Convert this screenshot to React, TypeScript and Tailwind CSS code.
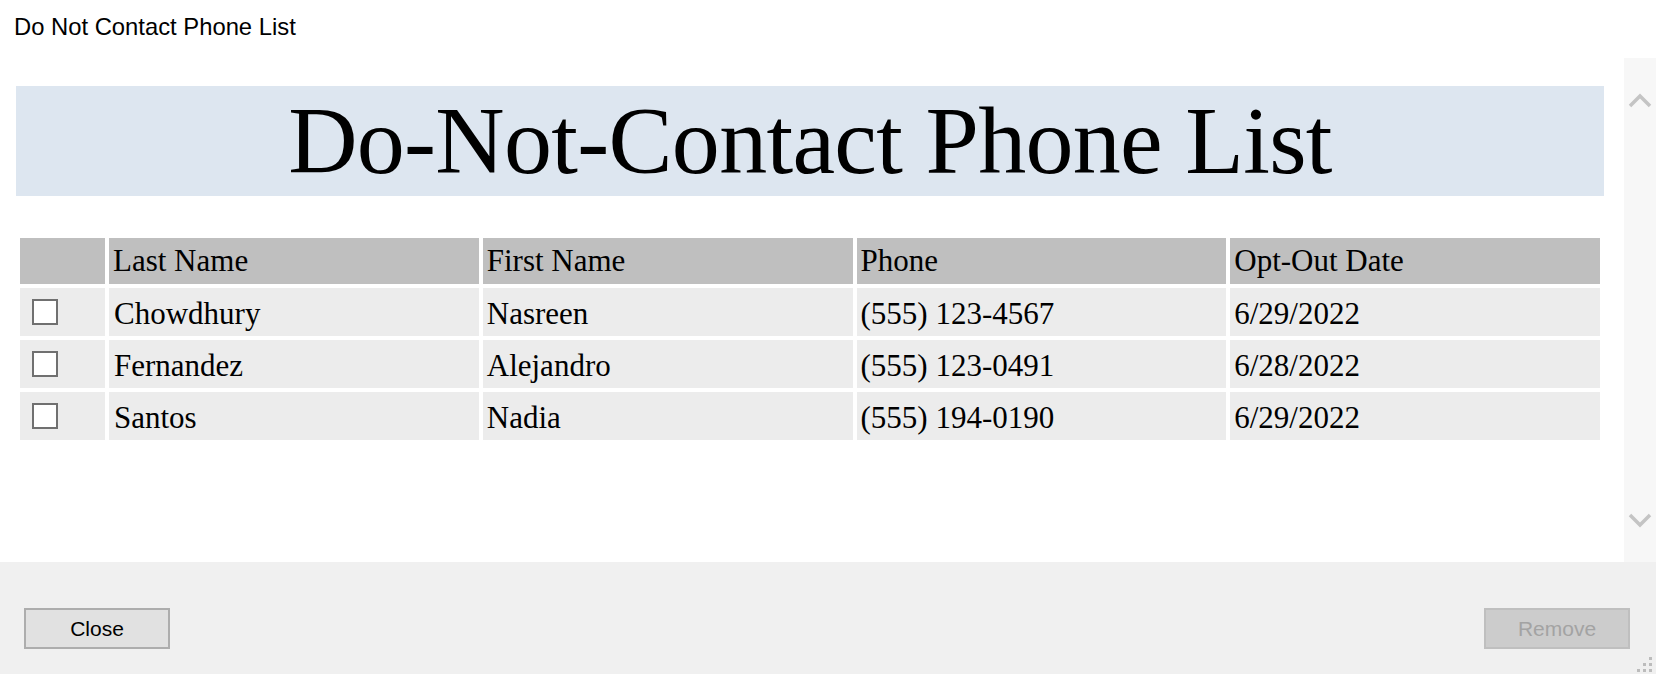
import React from 'react';

const rows = [
    { last: 'Chowdhury', first: 'Nasreen', phone: '(555) 123-4567', date: '6/29/2022' },
    { last: 'Fernandez', first: 'Alejandro', phone: '(555) 123-0491', date: '6/28/2022' },
    { last: 'Santos', first: 'Nadia', phone: '(555) 194-0190', date: '6/29/2022' },
];

const columns = ['Last Name', 'First Name', 'Phone', 'Opt-Out Date'];

function Chevron({ down }: { down?: boolean }) {
    return (
        <svg width="24" height="18" viewBox="0 0 24 18" className="block">
            <polyline
                points={down ? '2,4 12,14 22,4' : '2,14 12,4 22,14'}
                fill="none"
                stroke="#c4c4c4"
                strokeWidth="3.5"
            />
        </svg>
    );
}

export default function App() {
    return (
        <div className="w-[1656px] h-[674px] flex flex-col bg-white font-['Liberation_Sans',Arial,sans-serif] text-black overflow-hidden">
            {/* window title */}
            <div className="h-[58px] shrink-0 pl-[14px] pt-[13px] text-[23.8px] leading-[28px]">
                Do Not Contact Phone List
            </div>

            {/* browser area */}
            <div className="h-[504px] shrink-0 flex">
                <div className="flex-1 pt-[28px] pl-[16px] pr-[20px] font-['Liberation_Serif','Times_New_Roman',serif]">
                    <h1 className="bg-[#dde6f0] text-center text-[96px] leading-[110px] tracking-[-0.7px] font-normal">
                        Do-Not-Contact Phone List
                    </h1>

                    <div className="mt-[38px] p-[4px] grid grid-cols-[85px_1fr_1fr_1fr_1fr] gap-[4px] text-[31px] leading-[36px]">
                        <div className="h-[46px] bg-[#bfbfbf]" />
                        {columns.map((c) => (
                            <div key={c} className="h-[46px] bg-[#bfbfbf] flex items-center pl-[4px]">
                                {c}
                            </div>
                        ))}

                        {rows.map((r) => (
                            <React.Fragment key={r.last}>
                                <div className="h-[48px] bg-[#ececec] flex items-center pl-[12px]">
                                    <div className="w-[26px] h-[26px] border-2 border-[#707070] bg-white" />
                                </div>
                                <div className="h-[48px] bg-[#ececec] flex items-center pl-[5px] pt-[4px]">{r.last}</div>
                                <div className="h-[48px] bg-[#ececec] flex items-center pl-[4px] pt-[4px]">{r.first}</div>
                                <div className="h-[48px] bg-[#ececec] flex items-center pl-[4px] pt-[4px]">{r.phone}</div>
                                <div className="h-[48px] bg-[#ececec] flex items-center pl-[4px] pt-[4px]">{r.date}</div>
                            </React.Fragment>
                        ))}
                    </div>
                </div>

                {/* disabled scrollbar */}
                <div className="w-[32px] bg-[#f7f7f7] flex flex-col items-center justify-between pt-[34px] pb-[33px]">
                    <Chevron />
                    <Chevron down />
                </div>
            </div>

            {/* button panel */}
            <div className="relative flex-1 bg-[#f0f0f0] flex items-start justify-between pt-[46px] pl-[24px] pr-[26px]">
                <button className="w-[146px] h-[41px] border-2 border-[#adadad] bg-[#e1e1e1] text-[21px] leading-none">
                    Close
                </button>
                <button disabled className="w-[146px] h-[41px] border-2 border-[#bfbfbf] bg-[#cccccc] text-[#a3a3a3] text-[21px] leading-none">
                    Remove
                </button>

                {/* size grip */}
                <svg width="15" height="15" viewBox="0 0 15 15" className="absolute right-[4px] bottom-[2px]">
                    <rect x="12" y="0" width="3" height="3" fill="#bcbcbc" />
                    <rect x="6" y="6" width="3" height="3" fill="#bcbcbc" />
                    <rect x="12" y="6" width="3" height="3" fill="#bcbcbc" />
                    <rect x="0" y="12" width="3" height="3" fill="#bcbcbc" />
                    <rect x="6" y="12" width="3" height="3" fill="#bcbcbc" />
                    <rect x="12" y="12" width="3" height="3" fill="#bcbcbc" />
                </svg>
            </div>
        </div>
    );
}
